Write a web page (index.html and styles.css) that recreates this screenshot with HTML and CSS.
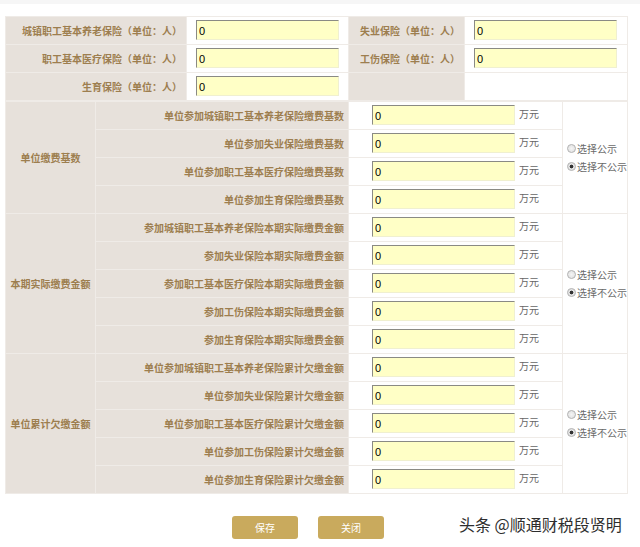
FILE: index.html
```html
<!DOCTYPE html>
<html lang="zh">
<head>
<meta charset="utf-8">
<title>表单</title>
<link rel="stylesheet" href="styles.css">
</head>
<body>
<div class="topband"></div>
<div class="page">
  <table class="grid top">
    <colgroup><col class="c1"><col class="c2"><col class="c3"><col class="c4"></colgroup>
    <tr>
      <td class="lab">城镇职工基本养老保险（单位：人）</td>
      <td class="val"><input class="fld" value="0"></td>
      <td class="lab">失业保险（单位：人）</td>
      <td class="val"><input class="fld" value="0"></td>
    </tr>
    <tr>
      <td class="lab">职工基本医疗保险（单位：人）</td>
      <td class="val"><input class="fld" value="0"></td>
      <td class="lab">工伤保险（单位：人）</td>
      <td class="val"><input class="fld" value="0"></td>
    </tr>
    <tr>
      <td class="lab">生育保险（单位：人）</td>
      <td class="val"><input class="fld" value="0"></td>
      <td class="lab"></td>
      <td class="val"></td>
    </tr>
  </table>
  <table class="grid sec">
    <colgroup><col class="s1"><col class="s2"><col class="s3"><col class="s4"></colgroup>
    <tr>
      <td class="lab head" rowspan="4">单位缴费基数</td>
      <td class="lab">单位参加城镇职工基本养老保险缴费基数</td>
      <td class="amt"><input class="fld" value="0"><span class="unit">万元</span></td>
      <td class="pub" rowspan="4">
        <label class="opt"><input type="radio" name="p1" class="rd">选择公示</label>
        <label class="opt"><input type="radio" name="p1" class="rd" checked>选择不公示</label>
      </td>
    </tr>
    <tr>
      <td class="lab">单位参加失业保险缴费基数</td>
      <td class="amt"><input class="fld" value="0"><span class="unit">万元</span></td>
    </tr>
    <tr>
      <td class="lab">单位参加职工基本医疗保险缴费基数</td>
      <td class="amt"><input class="fld" value="0"><span class="unit">万元</span></td>
    </tr>
    <tr>
      <td class="lab">单位参加生育保险缴费基数</td>
      <td class="amt"><input class="fld" value="0"><span class="unit">万元</span></td>
    </tr>

    <tr>
      <td class="lab head" rowspan="5">本期实际缴费金额</td>
      <td class="lab">参加城镇职工基本养老保险本期实际缴费金额</td>
      <td class="amt"><input class="fld" value="0"><span class="unit">万元</span></td>
      <td class="pub" rowspan="5">
        <label class="opt"><input type="radio" name="p2" class="rd">选择公示</label>
        <label class="opt"><input type="radio" name="p2" class="rd" checked>选择不公示</label>
      </td>
    </tr>
    <tr>
      <td class="lab">参加失业保险本期实际缴费金额</td>
      <td class="amt"><input class="fld" value="0"><span class="unit">万元</span></td>
    </tr>
    <tr>
      <td class="lab">参加职工基本医疗保险本期实际缴费金额</td>
      <td class="amt"><input class="fld" value="0"><span class="unit">万元</span></td>
    </tr>
    <tr>
      <td class="lab">参加工伤保险本期实际缴费金额</td>
      <td class="amt"><input class="fld" value="0"><span class="unit">万元</span></td>
    </tr>
    <tr>
      <td class="lab">参加生育保险本期实际缴费金额</td>
      <td class="amt"><input class="fld" value="0"><span class="unit">万元</span></td>
    </tr>

    <tr>
      <td class="lab head" rowspan="5">单位累计欠缴金额</td>
      <td class="lab">单位参加城镇职工基本养老保险累计欠缴金额</td>
      <td class="amt"><input class="fld" value="0"><span class="unit">万元</span></td>
      <td class="pub" rowspan="5">
        <label class="opt"><input type="radio" name="p3" class="rd">选择公示</label>
        <label class="opt"><input type="radio" name="p3" class="rd" checked>选择不公示</label>
      </td>
    </tr>
    <tr>
      <td class="lab">单位参加失业保险累计欠缴金额</td>
      <td class="amt"><input class="fld" value="0"><span class="unit">万元</span></td>
    </tr>
    <tr>
      <td class="lab">单位参加职工基本医疗保险累计欠缴金额</td>
      <td class="amt"><input class="fld" value="0"><span class="unit">万元</span></td>
    </tr>
    <tr>
      <td class="lab">单位参加工伤保险累计欠缴金额</td>
      <td class="amt"><input class="fld" value="0"><span class="unit">万元</span></td>
    </tr>
    <tr>
      <td class="lab">单位参加生育保险累计欠缴金额</td>
      <td class="amt"><input class="fld" value="0"><span class="unit">万元</span></td>
    </tr>
  </table>
  <div class="actions">
    <button class="btn">保存</button>
    <button class="btn">关闭</button>
  </div>
</div>
<div class="mark">头条 @顺通财税段贤明</div>
</body>
</html>
```
FILE: styles.css
```css
html, body {
  margin: 0;
  padding: 0;
  background: #ffffff;
}
body {
  font-family: "Noto Sans CJK SC", "Noto Sans", sans-serif;
  position: relative;
  width: 640px;
  height: 547px;
  overflow: hidden;
}
.topband {
  height: 4px;
  background: #f6f6f6;
}
.page {
  padding: 12px 0 0 5px;
}
.grid {
  border-collapse: collapse;
  table-layout: fixed;
  width: 622px;
}
.grid td {
  height: 27px;
  padding: 0;
  border: 1px solid #efebe7;
  font-size: 10px;
  line-height: 12px;
}
.c1 { width: 181px; }
.c2 { width: 162px; }
.c3 { width: 116px; }
.c4 { width: 163px; }
.s1 { width: 90px; }
.s2 { width: 253px; }
.s3 { width: 214px; }
.s4 { width: 65px; }
.lab {
  background: #e7e1db;
  color: #9d7e4f;
  font-weight: 700;
  text-align: right;
  padding-right: 4px !important;
}
.lab.head {
  text-align: center;
  padding-right: 0 !important;
}
.val {
  background: #fff;
  padding-left: 9px !important;
}
.amt {
  background: #fff;
  padding-left: 23px !important;
  white-space: nowrap;
}
.fld {
  box-sizing: border-box;
  width: 143px;
  height: 20px;
  margin: 0 0 2px 0;
  padding: 2px 0 0 2px;
  border: 1px solid;
  border-color: #8a8a84 #f0f0d0 #f0f0d0 #8a8a84;
  background: #ffffc6;
  font-family: "Liberation Sans", Arial, sans-serif;
  font-size: 11px;
  color: #000;
  vertical-align: middle;
}
.unit {
  display: inline-block;
  margin-left: 4px;
  color: #666;
  font-size: 10px;
  vertical-align: middle;
  margin-bottom: 3px;
}
.pub {
  background: #fff;
  padding-left: 4px !important;
  color: #6a6a6a;
}
.opt {
  display: flex;
  align-items: center;
  height: 18px;
  font-size: 10px;
  white-space: nowrap;
}
.rd {
  appearance: none;
  -webkit-appearance: none;
  box-sizing: border-box;
  width: 9px;
  height: 9px;
  margin: 0 1px 0 0;
  border: 1px solid #b4b4b4;
  border-radius: 50%;
  background: radial-gradient(circle, #f4f4f4 0, #dedede 100%);
  position: relative;
}
.rd:checked {
  background: radial-gradient(circle, #333 0, #333 1.6px, #e6e6e6 2.2px, #dcdcdc 100%);
}
.actions {
  display: flex;
  gap: 20px;
  padding: 22px 0 0 227px;
}
.btn {
  width: 66px;
  height: 23px;
  border: 0;
  border-radius: 3px;
  background: #c9aa5d;
  color: #fff;
  font-family: "Noto Sans CJK SC", sans-serif;
  font-size: 10px;
  padding: 0;
}
.mark {
  position: absolute;
  left: 459px;
  top: 512px;
  font-family: "Noto Sans CJK SC", sans-serif;
  font-size: 16px;
  color: #2e2e2e;
  letter-spacing: 0;
  text-shadow: 0 0 2px #fff, 0 0 2px #fff;
}
```
